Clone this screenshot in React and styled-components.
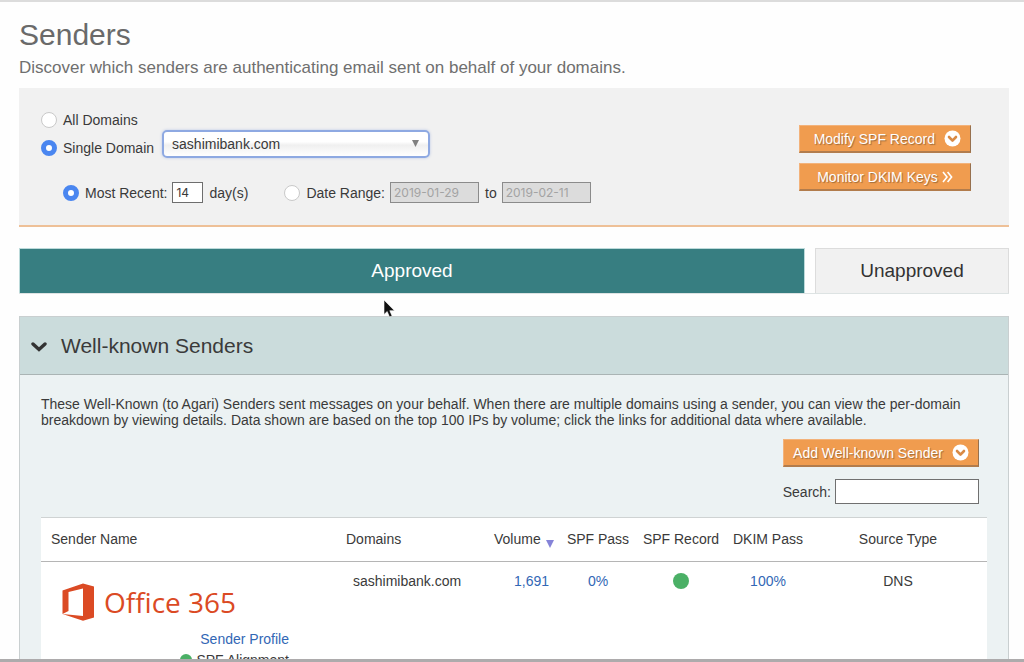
import React, { useState } from "react";
import styled, { createGlobalStyle } from "styled-components";

const GlobalStyle = createGlobalStyle`
  * {
    box-sizing: border-box;
  }
  body {
    margin: 0;
    background: #fefefe;
    color: #3a3a3a;
    font-family: "Liberation Sans", Arial, sans-serif;
    font-size: 14px;
    line-height: 16px;
  }
  button, input, select {
    font-family: inherit;
    font-size: inherit;
    color: inherit;
  }
`;

const Window = styled.div`
  height: 100vh;
  overflow: hidden;
  border-top: 2px solid #dcdcdc;
  border-bottom: 3px solid #adabac;
`;
const Page = styled.main`
  padding: 16px 15px 0 19px;
`;
const Title = styled.h1`
  margin: 0;
  color: #6a6a6a;
  font-size: 30px;
  font-weight: normal;
  line-height: 34px;
`;
const Subtitle = styled.p`
  margin: 5px 0 9px;
  color: #6f6f6f;
  font-size: 17px;
  line-height: 22px;
`;

/* filter panel */
const Filters = styled.form`
  display: flex;
  justify-content: space-between;
  align-items: flex-start;
  padding: 22px 38px 22px 22px;
  background: #f1f1f1;
  border-bottom: 2px solid #eec097;
`;
const FilterFields = styled.div`
  display: flex;
  flex-direction: column;
`;
const FilterRow = styled.div`
  display: flex;
  align-items: center;
  min-height: ${({ $tall }) => ($tall ? 28 : 20)}px;
  margin-top: ${({ $top }) => $top || 0}px;
  padding-left: ${({ $indent }) => ($indent ? 22 : 0)}px;
`;
const RadioLabel = styled.label`
  display: flex;
  align-items: center;
  gap: 6px;
`;
const Radio = styled.input.attrs({ type: "radio" })`
  appearance: none;
  width: 16px;
  height: 16px;
  margin: 0;
  border: 1px solid #c9c9c9;
  border-radius: 50%;
  background: #fff;
  &:checked {
    border: 5px solid #4a86f0;
  }
`;
const SelectBox = styled.div`
  display: grid;
  align-items: center;
  width: 268px;
  margin: -9px 0 0 8px;
  > * {
    grid-area: 1 / 1;
  }
  svg {
    justify-self: end;
    margin-right: 11px;
    pointer-events: none;
  }
`;
const Select = styled.select`
  appearance: none;
  height: 28px;
  padding: 0 8px;
  border: 2px solid #8ea9e2;
  border-radius: 5px;
  background: linear-gradient(#fff 40%, #f0f0f0 55%, #fff);
  box-shadow: 0 0 3px #b9c6e4;
  outline: none;
`;
const SmallInput = styled.input`
  width: ${({ $wide }) => ($wide ? 89 : 31)}px;
  height: 21px;
  margin: 0 6px 0 5px;
  padding: 0 3px;
  border: 1px solid #6e6e6e;
  background: #fff;
  font-family: Inter, sans-serif;
  font-size: 12px;
  &:disabled {
    border-color: #8b8b8b;
    background: #dcdcdc;
    color: #a3a3a3;
  }
`;
const Spacer = styled.span`
  width: 36px;
`;
const ButtonStack = styled.div`
  display: flex;
  flex-direction: column;
  gap: 10px;
  width: 172px;
  padding-top: 15px;
`;
const OrangeButton = styled.button`
  display: flex;
  align-items: center;
  justify-content: ${({ $end }) => ($end ? "flex-end" : "center")};
  gap: ${({ $gap }) => $gap || 9}px;
  height: 28px;
  padding: 0 9px;
  border: 1px solid #f3b27a;
  border-right-color: #96704e;
  border-bottom: 2px solid #b27c4c;
  background: #f09c4f;
  color: #fff;
  text-shadow: 1px 1px 1px #9d6a3a;
  white-space: nowrap;
`;

/* approved / unapproved */
const Tabs = styled.div`
  display: flex;
  gap: 10px;
  margin: 21px 0 22px;
  border-bottom: 1px solid #dde3e3;
`;
const Tab = styled.button`
  flex: ${({ $active }) => ($active ? "1" : "0 0 194px")};
  height: 45px;
  border: 1px solid ${({ $active }) => ($active ? "#bcdada" : "#dcdcdc")};
  border-bottom: 0;
  background: ${({ $active }) => ($active ? "#377e81" : "#f1f1f1")};
  color: ${({ $active }) => ($active ? "#fff" : "#333")};
  font-size: 19px;
`;

/* well-known senders */
const Panel = styled.section`
  border: 1px solid #c9cfd0;
  background: #ecf2f3;
`;
const PanelHeader = styled.h2`
  margin: 0;
  border-bottom: 1px solid #aab4b4;
  background: #cbdcdc;
  font-size: 21px;
  font-weight: normal;
  button {
    display: flex;
    align-items: center;
    gap: 14px;
    width: 100%;
    height: 57px;
    padding: 0 11px;
    border: 0;
    background: none;
    text-align: left;
  }
`;
const PanelBody = styled.div`
  padding: 21px 21px 0;
`;
const Intro = styled.p`
  margin: 0 20px 11px 0;
`;
const Tools = styled.div`
  display: flex;
  flex-direction: column;
  align-items: flex-end;
  gap: 12px;
  margin: 0 8px 13px 0;
`;
const SearchLabel = styled.label`
  display: flex;
  align-items: center;
  gap: 4px;
`;
const SearchInput = styled.input`
  width: 144px;
  height: 25px;
  padding: 0 4px;
  border: 1px solid #707070;
  background: #fff;
`;
const Table = styled.table`
  width: 100%;
  table-layout: fixed;
  border-collapse: collapse;
  border-top: 1px solid #cfd3d3;
  background: #fff;
`;
const Th = styled.th`
  height: 44px;
  padding: 0 0 2px ${({ $left }) => ($left ? 10 : 0)}px;
  border-bottom: 1px solid #b5b5b5;
  font-weight: normal;
  text-align: ${({ $left }) => ($left ? "left" : "center")};
  white-space: nowrap;
  svg {
    margin: 0 0 -4px 5px;
  }
`;
const Td = styled.td`
  padding: 11px ${({ $right }) => $right || 0}px 0 ${({ $left }) => $left || 0}px;
  text-align: ${({ $align }) => $align || "center"};
  vertical-align: top;
`;
const Link = styled.a`
  color: #3267b5;
  text-decoration: none;
`;
const Dot = styled.span`
  display: inline-block;
  width: ${({ $size }) => $size}px;
  height: ${({ $size }) => $size}px;
  border-radius: 50%;
  background: #4bb066;
  vertical-align: top;
`;
const Brand = styled.div`
  display: flex;
  align-items: center;
  gap: 9px;
  padding: 10px 0 10px 21px;
  color: #db4a24;
  font-family: "Open Sans", "Noto Sans", sans-serif;
  font-size: 28px;
  line-height: 38px;
`;
const SenderLinks = styled.div`
  display: flex;
  flex-direction: column;
  align-items: flex-end;
  gap: 5px;
  padding-right: 47px;
`;
const Alignment = styled.span`
  display: flex;
  align-items: center;
  gap: 4px;
`;
const Cursor = styled.svg`
  position: absolute;
  left: 383px;
  top: 299px;
`;

const CircleChevron = () => (
  <svg width="17" height="17" viewBox="0 0 17 17">
    <circle cx="8.5" cy="8.5" r="8" fill="#fff" />
    <path d="M5 7l3.5 3.600L12 7" fill="none" stroke="#d98a45" strokeWidth="2.6" strokeLinecap="round" strokeLinejoin="round" />
  </svg>
);

const DoubleChevron = () => (
  <svg width="11" height="12" viewBox="0 0 11 12">
    <path d="M1 1l4 5-4 5M5.600 1l4 5-4 5" fill="none" stroke="#fff" strokeWidth="1.6" />
  </svg>
);

const OfficeLogo = () => (
  <svg width="33" height="38" viewBox="0 0 33 38">
    <path
      d="M0.500 7.500L21 0.500 32 3.500V34.500L21 37.800 0.500 31 21 33V5.500L6.500 9V28L0.500 31z"
      fill="#db4a24"
    />
  </svg>
);

function App() {
  const [tab, setTab] = useState("approved");
  const [open, setOpen] = useState(true);

  return (
    <Window>
      <GlobalStyle />
      <Page>
        <Title>Senders</Title>
        <Subtitle>Discover which senders are authenticating email sent on behalf of your domains.</Subtitle>

        <Filters>
          <FilterFields>
            <FilterRow>
              <RadioLabel>
                <Radio name="scope" />
                All Domains
              </RadioLabel>
            </FilterRow>
            <FilterRow $tall $top={4}>
              <RadioLabel>
                <Radio name="scope" defaultChecked />
                Single Domain
              </RadioLabel>
              <SelectBox>
                <Select aria-label="Domain">
                  <option>sashimibank.com</option>
                </Select>
                <svg width="7" height="7" viewBox="0 0 7 7">
                  <path d="M0 0h7L3.500 7z" fill="#808080" />
                </svg>
              </SelectBox>
            </FilterRow>
            <FilterRow $top={20} $indent>
              <RadioLabel>
                <Radio name="period" defaultChecked />
                Most Recent:
              </RadioLabel>
              <SmallInput aria-label="Number of days" defaultValue="14" />
              day(s)
              <Spacer />
              <RadioLabel>
                <Radio name="period" />
                Date Range:
              </RadioLabel>
              <SmallInput $wide aria-label="From" defaultValue="2019-01-29" disabled />
              to
              <SmallInput $wide aria-label="To" defaultValue="2019-02-11" disabled />
            </FilterRow>
          </FilterFields>
          <ButtonStack>
            <OrangeButton type="button" $end>
              Modify SPF Record <CircleChevron />
            </OrangeButton>
            <OrangeButton type="button" $gap={4}>
              Monitor DKIM Keys <DoubleChevron />
            </OrangeButton>
          </ButtonStack>
        </Filters>

        <Tabs>
          <Tab $active={tab === "approved"} onClick={() => setTab("approved")}>
            Approved
          </Tab>
          <Tab $active={tab === "unapproved"} onClick={() => setTab("unapproved")}>
            Unapproved
          </Tab>
        </Tabs>

        <Panel>
          <PanelHeader>
            <button aria-expanded={open} onClick={() => setOpen(!open)}>
              <svg width="16" height="12" viewBox="0 0 16 12">
                <path d="M2 4l6 5.500 6-5.500" fill="none" stroke="#333" strokeWidth="3.4" strokeLinecap="round" />
              </svg>
              Well-known Senders
            </button>
          </PanelHeader>
          {open && (
            <PanelBody>
              <Intro>
                These Well-Known (to Agari) Senders sent messages on your behalf. When there are multiple domains using
                a sender, you can view the per-domain breakdown by viewing details. Data shown are based on the top 100
                IPs by volume; click the links for additional data where available.
              </Intro>
              <Tools>
                <OrangeButton type="button">
                  Add Well-known Sender <CircleChevron />
                </OrangeButton>
                <SearchLabel>
                  Search:
                  <SearchInput type="search" />
                </SearchLabel>
              </Tools>
              <Table>
                <colgroup>
                  <col />
                  <col width="148" />
                  <col width="77" />
                  <col width="74" />
                  <col width="92" />
                  <col width="82" />
                  <col width="178" />
                </colgroup>
                <thead>
                  <tr>
                    <Th $left>Sender Name</Th>
                    <Th $left>Domains</Th>
                    <Th $left>
                      Volume
                      <svg width="8" height="8" viewBox="0 0 8 8">
                        <path d="M0 0h8L4 8z" fill="#8583d8" />
                      </svg>
                    </Th>
                    <Th>SPF Pass</Th>
                    <Th>SPF Record</Th>
                    <Th>DKIM Pass</Th>
                    <Th>Source Type</Th>
                  </tr>
                </thead>
                <tbody>
                  <tr>
                    <Td $align="left">
                      <Brand>
                        <OfficeLogo />
                        Office 365
                      </Brand>
                      <SenderLinks>
                        <Link href="#profile">Sender Profile</Link>
                        <Alignment>
                          <Dot $size={12} />
                          SPF Alignment
                        </Alignment>
                      </SenderLinks>
                    </Td>
                    <Td $align="left" $left={17}>
                      sashimibank.com
                    </Td>
                    <Td $align="right" $right={12}>
                      <Link href="#volume">1,691</Link>
                    </Td>
                    <Td>
                      <Link href="#spf">0%</Link>
                    </Td>
                    <Td>
                      <Dot $size={16} />
                    </Td>
                    <Td>
                      <Link href="#dkim">100%</Link>
                    </Td>
                    <Td>DNS</Td>
                  </tr>
                </tbody>
              </Table>
            </PanelBody>
          )}
        </Panel>
      </Page>
      <Cursor width="12" height="19" viewBox="0 0 12 19">
        <path d="M1 1v14.500l3.200-3 2.300 5.500 2.600-1.100-2.300-5.200h4.700z" fill="#111" stroke="#fff" strokeWidth="0.6" />
      </Cursor>
    </Window>
  );
}

export default App;
